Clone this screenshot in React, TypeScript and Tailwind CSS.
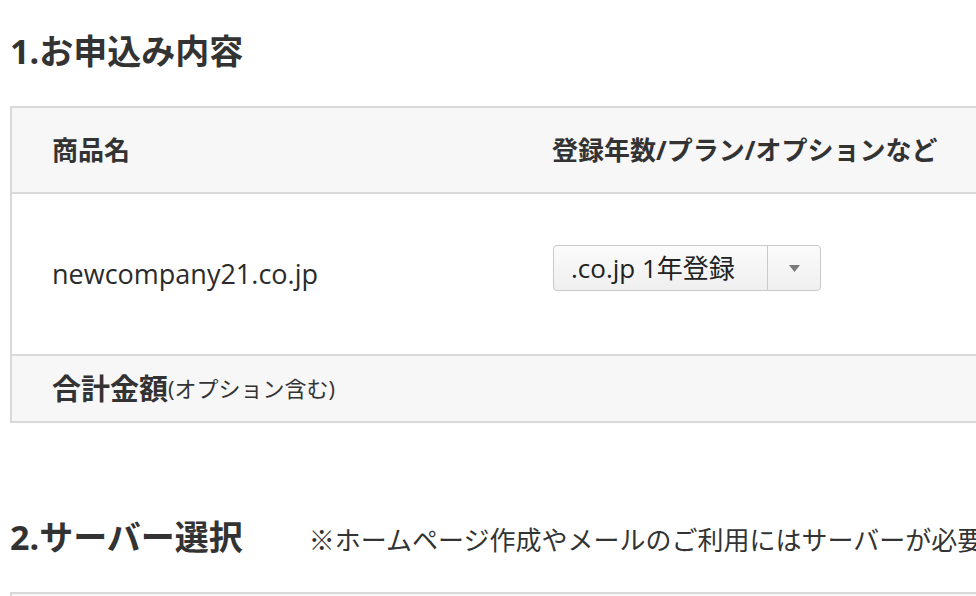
import React from "react";

const font = { fontFamily: '"Open Sans", "Noto Sans CJK JP", sans-serif' };

export default function App() {
  return (
    <div
      className="w-[976px] h-[596px] overflow-hidden bg-white text-[#333] pl-[10px]"
      style={font}
    >
      <h2 className="mt-[34px] text-[34px] leading-[34px] font-bold text-[#333] whitespace-nowrap">
        1.お申込み内容
      </h2>

      <div className="mt-[38px] w-[1100px] border-2 border-[#d9d9d9]">
        <div className="flex h-[86px] items-center bg-[#f7f7f7] border-b-2 border-[#d9d9d9] text-[26px] font-bold">
          <div className="w-[500px] pl-[40px]">商品名</div>
          <div className="pl-[40px] whitespace-nowrap">登録年数/プラン/オプションなど</div>
        </div>
        <div className="flex h-[162px] items-center bg-white border-b-2 border-[#d9d9d9]">
          <div className="w-[500px] pl-[40px] text-[27px] text-[#2b2b2b]">newcompany21.co.jp</div>
          <div className="pl-[41px] mb-[12px]">
            <div className="flex h-[46px] w-[268px] rounded-[4px] border border-[#c9c9c9] bg-gradient-to-b from-[#fbfbfb] to-[#efefef]">
              <div className="flex w-[214px] items-center pl-[17px] text-[26px] text-[#222] border-r border-[#c9c9c9] whitespace-nowrap">
                .co.jp 1年登録
              </div>
              <div className="flex flex-1 items-center justify-center">
                <svg width="11" height="7" viewBox="0 0 11 7">
                  <path d="M0 0 L11 0 L5.5 7 Z" fill="#7a7a7a" />
                </svg>
              </div>
            </div>
          </div>
        </div>
        <div className="flex h-[65px] items-center bg-[#f7f7f7] pl-[40px] whitespace-nowrap">
          <span className="text-[29px] font-bold">合計金額</span>
          <span className="text-[22px]">(オプション含む)</span>
        </div>
      </div>

      <div className="mt-[97px] flex items-start whitespace-nowrap">
        <h2 className="text-[34px] leading-[34px] font-bold text-[#333]">2.サーバー選択</h2>
        <span className="ml-[66px] mt-[3px] text-[26px] leading-[34px] text-[#333]">
          ※ホームページ作成やメールのご利用にはサーバーが必要です。
        </span>
      </div>

      <div className="mt-[35px] w-[1100px] h-[60px] border-2 border-[#d9d9d9] bg-[#f7f7f7]" />
    </div>
  );
}
